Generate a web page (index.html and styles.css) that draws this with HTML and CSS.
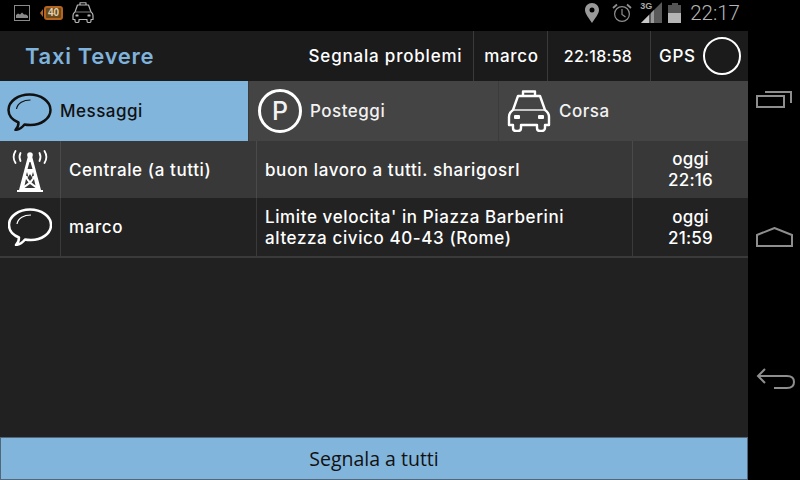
FILE: index.html
```html
<!DOCTYPE html>
<html lang="en">
<head>
  <meta charset="UTF-8">
  <title>Taxi Tevere</title>
  <link rel="stylesheet" href="styles.css">
</head>
<body>
  <div class="statusbar">
    <div class="status-left">
      <svg class="st-pic" width="16" height="16" viewBox="0 0 16 16"><rect x="0.5" y="0.5" width="15" height="15" fill="none" stroke="#8a8a8a"/><path d="M2 13 V10 L4 8.5 L6 9.5 L8 7.5 L10 9.5 L12 9.5 L14 11 V13 Z" fill="#8a8a8a"/></svg>
      <div class="badge">40</div>
      <svg class="st-taxi" width="22" height="21" viewBox="0 0 44 42"><use href="#taxi"/></svg>
    </div>
    <div class="status-right">
      <svg width="14" height="20" viewBox="0 0 14 20"><path fill-rule="evenodd" d="M7 0 C3 0 0 3 0 7 C0 11 4 15 7 20 C10 15 14 11 14 7 C14 3 11 0 7 0 Z M7 4.5 A2.5 2.5 0 1 1 7 9.5 A2.5 2.5 0 1 1 7 4.5 Z" fill="#9a9a9a"/></svg>
      <svg class="st-alarm" width="20" height="20" viewBox="0 0 20 20" fill="none" stroke="#8f8f8f" stroke-width="1.2"><circle cx="10" cy="11" r="7.4"/><path d="M10 6 V11.5 L13.5 14"/><path d="M1 5 L5 1.5 M19 5 L15 1.5" stroke-width="1.8"/></svg>
      <div class="signal">
        <span class="g3">3G</span>
        <svg width="21" height="21" viewBox="0 0 21 21"><path d="M0 21 L21 0 V21 Z" fill="#5a5a5a"/><path d="M0 21 L8 13 V21 Z" fill="#c8c8c8"/><path d="M10 21 V11 L13 8 V21 Z" fill="#9a9a9a"/></svg>
      </div>
      <svg class="st-batt" width="14" height="20" viewBox="0 0 14 20"><path d="M4 0 H10 V2 H13 V20 H0 V2 H4 Z" fill="#555"/><rect y="10" width="13" height="10" fill="#b5b5b5"/></svg>
      <span class="clock">22:17</span>
    </div>
  </div>

  <svg class="defs" width="0" height="0">
    <defs>
      <g id="taxi" fill="none" stroke="currentColor" stroke-width="2.4" stroke-linejoin="round">
        <path d="M16 6 V1.500 H28 V6"/>
        <path d="M11 6 H33 L38 20 C41 22 42 24 42 27 V35 H38 V38 C38 40 36 41 35 41 H33 C31 41 30 40 30 38 V35 H14 V38 C14 40 13 41 11 41 H9 C7 41 6 40 6 38 V35 H2 V27 C2 24 3 22 6 20 Z"/>
        <path d="M7 20 H37" stroke-width="1.4"/>
        <rect x="7" y="25" width="6" height="4" rx="1" fill="currentColor" stroke="none"/>
        <rect x="31" y="25" width="6" height="4" rx="1" fill="currentColor" stroke="none"/>
      </g>
      <g id="bubble" fill="none" stroke="currentColor" stroke-width="2.5" stroke-linejoin="round">
        <path d="M22 1.5 C33 1.5 43 8 43 17 C43 26 33 32 23 32 C21 32 19 32 17 31.5 C15 34 11 36.5 8 37 C10 35 11 32 11 29.5 C5 27 1 22.5 1 17 C1 8 11 1.5 22 1.5 Z"/>
        <path d="M9 16 C10 10 16 7 23 7" stroke-width="1.2"/>
      </g>
    </defs>
  </svg>

  <div class="app">
    <div class="main">
      <header class="topbar">
        <div class="title">Taxi Tevere</div>
        <div class="top-cell cell-report">Segnala problemi</div>
        <div class="top-cell cell-user">marco</div>
        <div class="top-cell cell-time">22:18:58</div>
        <div class="top-cell cell-gps">GPS <span class="gps-dot"></span></div>
      </header>

      <nav class="tabs">
        <div class="tab active">
          <svg class="tab-bubble" width="45" height="38" viewBox="0 0 44 38"><use href="#bubble"/></svg>
          Messaggi
        </div>
        <div class="tab">
          <span class="park">P</span>
          Posteggi
        </div>
        <div class="tab">
          <svg class="tab-taxi" width="44" height="42" viewBox="0 0 44 42"><use href="#taxi"/></svg>
          Corsa
        </div>
      </nav>

      <div class="msg msg-light">
        <div class="msg-icon">
          <svg width="36" height="46" viewBox="0 0 36 46">
            <g fill="none" stroke="#fff" stroke-width="1.8" stroke-linecap="round">
              <path d="M3.500 4 C1 8 1 12 3.500 16 M32.500 4 C35 8 35 12 32.500 16"/>
              <path d="M8.500 6 C7 9 7 11 8.500 14 M27.500 6 C29 9 29 11 27.500 14"/>
            </g>
            <circle cx="18" cy="8" r="2.800" fill="#fff"/>
            <path fill-rule="evenodd" fill="#fff" d="M16 9 H20 L29 43 H31 V45 H5 V43 H7 Z M17.500 15 L15.500 22 H20.500 L18.500 15 Z M15 25 L14 28.500 L16.500 30 Z M21 25 L19.500 30 L22 28.500 Z M18 27 L15.500 31 L18 34 L20.500 31 Z M14 32 L12.500 38.500 L16.500 35.500 Z M22 32 L19.500 35.500 L23.500 38.500 Z M18 37 L12.500 41 H23.500 Z"/>
          </svg>
        </div>
        <div class="msg-name">Centrale (a tutti)</div>
        <div class="msg-text">buon lavoro a tutti. sharigosrl</div>
        <div class="msg-date">oggi<br>22:16</div>
      </div>
      <div class="msg msg-dark">
        <div class="msg-icon">
          <svg width="44" height="38" viewBox="0 0 44 38"><use href="#bubble"/></svg>
        </div>
        <div class="msg-name">marco</div>
        <div class="msg-text">Limite velocita' in Piazza Barberini<br>altezza civico 40-43 (Rome)</div>
        <div class="msg-date">oggi<br>21:59</div>
      </div>

      <div class="spacer"></div>
      <button class="report-all">Segnala a tutti</button>
    </div>

    <aside class="softkeys">
      <svg width="36" height="20" viewBox="0 0 36 20" fill="none" stroke="#8e8e8e" stroke-width="2"><rect x="1" y="7" width="27" height="11"/><path d="M9 3 H35 V14"/></svg>
      <svg class="key-home" width="37" height="20" viewBox="0 0 37 20" fill="none" stroke="#8e8e8e" stroke-width="2"><path d="M1 19 V8 L18.500 1 L36 8 V19 Z"/></svg>
      <svg class="key-back" width="40" height="24" viewBox="0 0 40 24" fill="none" stroke="#8e8e8e" stroke-width="2"><path d="M9 2 L2 9 L9 16"/><path d="M2 9 H31 C35 9 38 11 38 15 C38 19 35 21 31 21 H18"/></svg>
    </aside>
  </div>
</body>
</html>
```

FILE: styles.css
```css
* {
  box-sizing: border-box;
}

html, body {
  margin: 0;
  width: 800px;
  height: 480px;
  overflow: hidden;
  background: #000;
  color: #fff;
  font-family: Inter, "Open Sans", sans-serif;
}

.defs {
  display: none;
}

.statusbar {
  height: 31px;
  background: #000;
  display: flex;
  justify-content: space-between;
  align-items: center;
  padding: 0 60px 6px 14px;
}

.status-left, .status-right {
  display: flex;
  align-items: center;
}

.badge {
  position: relative;
  margin-left: 14px;
  width: 19px;
  height: 14px;
  background: #6b4a1c;
  border: 2px solid #b5651d;
  border-radius: 3px;
  color: #e0d3b5;
  font: bold 10px/10px "Liberation Sans", sans-serif;
  text-align: center;
}

.badge::before {
  content: "";
  position: absolute;
  left: -6px;
  top: 1px;
  border: 4px solid transparent;
  border-left: 0;
  border-right: 3px solid #b5651d;
}

.st-taxi {
  margin-left: 9px;
  color: #b5b5b5;
}

.st-alarm {
  margin-left: 13px;
}

.signal {
  position: relative;
  margin-left: 9px;
  width: 21px;
  height: 21px;
}

.g3 {
  position: absolute;
  left: -1px;
  top: -1px;
  color: #aaa;
  font: bold 9px/11px "Liberation Sans", sans-serif;
}

.st-batt {
  margin-left: 6px;
}

.clock {
  margin-left: 8px;
  color: #b5b5b5;
  font: 300 20.5px/24px Roboto, sans-serif;
}

.app {
  display: flex;
  height: 449px;
}

.main {
  width: 748px;
  display: flex;
  flex-direction: column;
  background: #212121;
}

.topbar {
  height: 50px;
  background: #1b1b1b;
  display: flex;
  align-items: center;
  font-size: 17px;
  font-weight: 500;
  letter-spacing: 0.7px;
}

.title {
  flex: 1;
  padding-left: 25px;
  color: #7fb3dc;
  font-size: 22px;
  font-weight: 600;
  letter-spacing: 0.7px;
}

.top-cell {
  height: 100%;
  display: flex;
  align-items: center;
  justify-content: center;
  border-left: 1px solid #3a3a3a;
}

.cell-report {
  border-left: 0;
  width: 175px;
  letter-spacing: 0.8px;
}

.cell-user {
  width: 74px;
  padding-left: 2px;
}

.cell-time {
  width: 103px;
  padding-right: 2px;
  font-size: 16px;
  letter-spacing: 0.3px;
}

.cell-gps {
  width: 98px;
  justify-content: flex-start;
  padding-left: 8px;
  gap: 7px;
}

.gps-dot {
  width: 38px;
  height: 38px;
  border: 2.5px solid #fff;
  border-radius: 50%;
}

.tabs {
  height: 60px;
  display: flex;
  background: #444;
}

.tab {
  width: 250px;
  display: flex;
  align-items: center;
  font-size: 17px;
  font-weight: 500;
  letter-spacing: 0.5px;
  border-left: 1px solid #3b3b3b;
  color: #f2f2f2;
}

.tab.active {
  width: 248px;
  background: #82b5dc;
  color: #111;
  border-left: 0;
}

.tab-bubble {
  margin: 1px 8px 0 7px;
}

.park {
  width: 44px;
  height: 44px;
  margin: 0 8px 0 9px;
  border: 3px solid #fff;
  border-radius: 50%;
  display: flex;
  align-items: center;
  justify-content: center;
  font-size: 25px;
  letter-spacing: 0;
}

.tab-taxi {
  margin: 0 8px;
  color: #fff;
}

.msg {
  display: grid;
  grid-template-columns: 61px 196px 376px 1fr;
  font-size: 17px;
  font-weight: 500;
  letter-spacing: 0.6px;
  line-height: 21px;
}

.msg-light {
  height: 57px;
  background: #383838;
}

.msg-dark {
  height: 60px;
  background: #222;
  border-bottom: 2px solid #3a3a3a;
}

.msg > div {
  display: flex;
  align-items: center;
  padding-top: 1px;
  border-right: 1px solid #4a4a4a;
}

.msg-dark > div {
  border-right-color: #3a3a3a;
}

.msg-name, .msg-text {
  padding-left: 8px;
}

.msg .msg-icon {
  justify-content: center;
  padding-top: 0;
}

.msg .msg-date {
  justify-content: center;
  text-align: center;
  border-right: 0;
  letter-spacing: 0.2px;
}

.spacer {
  flex: 1;
}

.report-all {
  height: 43px;
  background: #82b5dc;
  border: 1px solid #52687a;
  color: #111;
  font: 19.500px "Open Sans", sans-serif;
}

.softkeys {
  width: 52px;
  display: flex;
  flex-direction: column;
  align-items: center;
  padding-top: 58px;
}

.key-home {
  margin-top: 118px;
}

.key-back {
  margin-top: 120px;
  margin-left: 3px;
}
```
